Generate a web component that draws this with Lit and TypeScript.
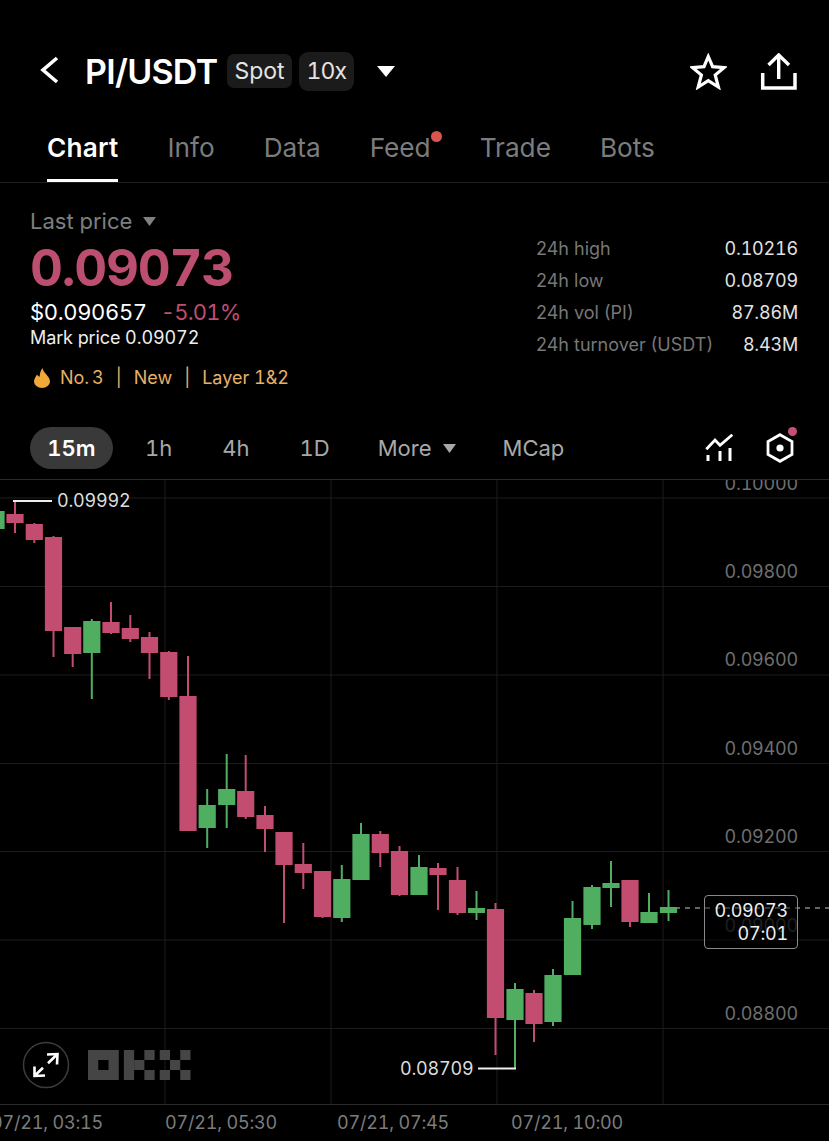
import { LitElement, html, svg, css } from "lit";
import { customElement } from "lit/decorators.js";

// x, wick top, body top, body bottom, wick bottom, up?
type Candle = [number, number, number, number, number, boolean];

const candles: Candle[] = [
  [-4, 507, 511, 529, 531, true],
  [15, 501, 514, 523, 533, false],
  [34.3, 523, 524, 540, 543, false],
  [53.5, 536, 537, 631, 657, false],
  [72.7, 627, 627, 654, 667, false],
  [91.8, 619, 621, 653, 699, true],
  [111, 602, 622, 633, 634, false],
  [130.3, 615, 628, 639, 642, false],
  [149.5, 632, 637, 653, 679, false],
  [168.8, 651, 652, 697, 700, false],
  [188, 656, 696, 831, 831, false],
  [207.2, 789, 805, 828, 848, true],
  [226.7, 754, 789, 805, 828, true],
  [245.7, 755, 791, 817, 819, false],
  [265, 806, 815, 829, 852, false],
  [284, 832, 832, 865, 923, false],
  [303.3, 843, 864, 873, 889, false],
  [322.5, 871, 871, 917, 918, false],
  [341.8, 865, 879, 918, 922, true],
  [361, 823, 834, 880, 880, true],
  [380.3, 831, 834, 853, 867, false],
  [399.5, 846, 851, 895, 896, false],
  [419, 855, 867, 895, 895, true],
  [438, 863, 868, 875, 910, false],
  [457.5, 867, 880, 913, 915, false],
  [476.5, 891, 908, 913, 920, true],
  [495.5, 903, 909, 1018, 1055, false],
  [515, 983, 989, 1020, 1068, true],
  [534, 990, 993, 1024, 1042, false],
  [553, 969, 975, 1022, 1026, true],
  [572.5, 901, 918, 975, 975, true],
  [592, 885, 887, 925, 929, true],
  [611, 861, 883, 888, 907, true],
  [630, 880, 880, 922, 927, false],
  [649, 893, 912, 923, 923, true],
  [668.5, 890, 907, 913, 921, true],
];

const gridY = [498, 586.5, 675, 763.5, 851.5, 940, 1028.5];
const gridX = [165, 331, 497, 663];
const priceLabels = [
  ["0.10000", 484],
  ["0.09800", 572],
  ["0.09600", 660],
  ["0.09400", 749],
  ["0.09200", 837],
  ["0.09000", 926],
  ["0.08800", 1014],
] as const;
const timeLabels = [
  ["07/21, 03:15", -9],
  ["07/21, 05:30", 165],
  ["07/21, 07:45", 337],
  ["07/21, 10:00", 511],
] as const;
const stats = [
  ["24h high", "0.10216"],
  ["24h low", "0.08709"],
  ["24h vol (PI)", "87.86M"],
  ["24h turnover (USDT)", "8.43M"],
];

// OKX mark, cells of 10.25 x 10
const logoCells = [
  [0, 0, 3, 1], [0, 2, 3, 1], [0, 1, 1, 1], [2, 1, 1, 1],
  [3.5, 0, 1, 3], [4.5, 1, 1, 1], [5.5, 0, 1, 1], [5.5, 2, 1, 1],
  [7, 0, 1, 1], [9, 0, 1, 1], [8, 1, 1, 1], [7, 2, 1, 1], [9, 2, 1, 1],
];

@customElement("app-root")
export class AppRoot extends LitElement {
  static styles = css`
    :host {
      display: block;
      width: 829px;
      height: 1141px;
      background: #000;
      overflow: hidden;
      color: #fff;
      font-family: Inter, "Liberation Sans", sans-serif;
      font-variant-numeric: tabular-nums;
    }
    svg {
      display: block;
    }
    .header {
      display: flex;
      align-items: center;
      height: 40px;
      padding: 51px 32px 27px 40px;
    }
    .back {
      margin-right: 26px;
    }
    .title {
      font-size: 34px;
      font-weight: 600;
      letter-spacing: -0.7px;
      margin-right: 10px;
    }
    .tag {
      display: flex;
      align-items: center;
      justify-content: center;
      height: 34px;
      padding: 0 7px;
      border-radius: 7px;
      background: #1b1b1b;
      font-size: 23px;
      color: #e4e4e4;
      margin-right: 7px;
    }
    .tag.tall {
      height: 39px;
      padding: 0 8px;
      border-radius: 9px;
      letter-spacing: -1px;
      margin-right: 8px;
    }
    .title-caret {
      margin-left: 15px;
    }
    .spacer {
      flex: 1;
    }
    .header-actions {
      display: flex;
      gap: 33px;
    }
    .tabs {
      display: flex;
      gap: 49px;
      height: 64px;
      padding-left: 47px;
      border-bottom: 1px solid #1f1f1f;
      font-size: 26.2px;
      color: #7c7c7c;
    }
    .tab {
      position: relative;
      height: 61px;
      padding-top: 14px;
      box-sizing: border-box;
      line-height: 32px;
    }
    .tab.active {
      color: #fff;
      font-weight: 600;
      letter-spacing: 0.2px;
      border-bottom: 3px solid #fff;
      height: 64px;
    }
    .tab .dot {
      position: absolute;
      top: 13px;
      right: -11px;
      width: 11px;
      height: 11px;
      border-radius: 50%;
      background: #d8544c;
    }
    .info {
      display: flex;
      justify-content: space-between;
      height: 226px;
      padding: 25px 31px 0 30px;
      box-sizing: border-box;
    }
    .last {
      display: flex;
      align-items: center;
      gap: 11px;
      font-size: 22px;
      line-height: 26px;
      color: #7f7f7f;
    }
    .price {
      font-size: 51px;
      font-weight: 700;
      line-height: 62px;
      margin-top: 3px;
      color: #bc4e70;
      letter-spacing: -1.2px;
    }
    .sub {
      display: flex;
      gap: 14px;
      font-size: 22px;
      line-height: 26px;
      letter-spacing: -0.35px;
    }
    .sub .chg {
      color: #bc4e70;
      letter-spacing: -0.8px;
    }
    .mark {
      font-size: 18px;
      line-height: 24px;
      margin-top: 1px;
      color: #eee;
      letter-spacing: -0.1px;
    }
    .labels {
      display: flex;
      align-items: center;
      margin-top: 16px;
      font-size: 18px;
      line-height: 24px;
      color: #e6b066;
    }
    .labels svg {
      margin: 0 10px 0 4px;
    }
    .labels .sep {
      margin: 0 12px;
    }
    .labels .rank {
      word-spacing: -2px;
    }
    .stats {
      display: grid;
      grid-template-columns: 1fr auto;
      width: 262px;
      grid-auto-rows: 32px;
      align-items: center;
      align-self: flex-start;
      margin-top: 24px;
      font-size: 18px;
      color: #777;
    }
    .stats .key {
      font-variant-numeric: normal;
    }
    .stats .val {
      text-align: right;
      color: #e2e2e2;
      letter-spacing: -0.2px;
    }
    .intervals {
      display: flex;
      align-items: center;
      height: 70px;
      padding: 8px 35px 0 30px;
      font-size: 22px;
      color: #a8a8a8;
      box-sizing: border-box;
    }
    .intervals .item {
      margin-right: 50px;
    }
    .intervals .pill {
      margin-right: 32px;
    }
    .intervals .before-more {
      margin-right: 48px;
    }
    .pill {
      display: flex;
      align-items: center;
      justify-content: center;
      width: 83px;
      height: 42px;
      border-radius: 21px;
      background: #393939;
      color: #fff;
      font-weight: 600;
    }
    .intervals .more {
      display: flex;
      align-items: center;
      gap: 11px;
      margin-right: 47px;
    }
    .tools {
      display: flex;
      align-items: center;
      gap: 32px;
      position: relative;
    }
    .tools .badge {
      position: absolute;
      right: -3px;
      top: -6px;
      width: 9px;
      height: 9px;
      border-radius: 50%;
      background: #c4507a;
    }
    .chart {
      position: relative;
      height: 626px;
      border-top: 1px solid #2b2b2b;
      border-bottom: 1px solid #2b2b2b;
      box-sizing: border-box;
      overflow: hidden;
    }
    .plot {
      position: absolute;
      left: 0;
      top: 0;
    }
    .plabel,
    .note {
      position: absolute;
      font-size: 18px;
      line-height: 22px;
      letter-spacing: -0.2px;
      transform: translateY(-50%);
    }
    .plabel {
      right: 31px;
      color: #6f6f6f;
    }
    .plabel.dim {
      opacity: 0.5;
    }
    .note {
      color: #dcdcdc;
    }
    .now {
      position: absolute;
      left: 704px;
      top: 415px;
      width: 94px;
      height: 54px;
      box-sizing: border-box;
      border: 1px solid #8a8a8a;
      border-radius: 4px;
      padding: 3px 9px 0 0;
      background: rgba(0, 0, 0, 0.45);
      text-align: right;
      font-size: 18px;
      line-height: 23px;
      letter-spacing: -0.2px;
      color: #efefef;
    }
    .expand {
      position: absolute;
      left: 22px;
      top: 561px;
    }
    .axis {
      position: relative;
      height: 35px;
      font-size: 18px;
      letter-spacing: -0.2px;
      color: #7c7c7c;
    }
    .axis span {
      position: absolute;
      top: 6px;
      line-height: 24px;
      white-space: nowrap;
    }
  `;

  render() {
    return html`
      <div class="header">
        <svg class="back" width="19" height="30" viewBox="0 0 19 30">
          <path d="M17 2 L3 14 L17 26" fill="none" stroke="#fff" stroke-width="3.6" />
        </svg>
        <div class="title">PI/USDT</div>
        <div class="tag">Spot</div>
        <div class="tag tall">10x</div>
        <svg class="title-caret" width="18" height="12" viewBox="0 0 18 12">
          <path d="M0 1 H18 L9 12 Z" fill="#fff" />
        </svg>
        <div class="spacer"></div>
        <div class="header-actions">
          <svg width="37" height="37" viewBox="0 0 37 37">
            <path
              d="M18.3 3.5 L22.6 13.7 L34 14.6 L25.2 22 L28.4 34 L18.3 27.6 L8.2 34 L11.4 22 L2.6 14.6 L14 13.7 Z"
              fill="none"
              stroke="#fff"
              stroke-width="3.2"
            />
          </svg>
          <svg width="37" height="37" viewBox="0 0 37 37">
            <path d="M2.7 20 V35 H35 V20" fill="none" stroke="#fff" stroke-width="3.5" />
            <path
              d="M18.7 26 V2 M8.5 12 L18.7 2 L29 12"
              fill="none"
              stroke="#fff"
              stroke-width="3.4"
            />
          </svg>
        </div>
      </div>
      <div class="tabs">
        <div class="tab active">Chart</div>
        <div class="tab">Info</div>
        <div class="tab">Data</div>
        <div class="tab">Feed<span class="dot"></span></div>
        <div class="tab">Trade</div>
        <div class="tab">Bots</div>
      </div>
      <div class="info">
        <div>
          <div class="last">
            Last price
            <svg width="13" height="9" viewBox="0 0 13 9"><path d="M0 0 H13 L6.5 9 Z" fill="#808080" /></svg>
          </div>
          <div class="price">0.09073</div>
          <div class="sub"><span>$0.090657</span><span class="chg">-5.01%</span></div>
          <div class="mark">Mark price 0.09072</div>
          <div class="labels">
            <svg width="16" height="20" viewBox="0 0 16 20">
              <path
                d="M8.5 0 C9 5 16 8 16 13.5 A8 6.5 0 0 1 0 13.5 C0 10.5 2 8.5 3 6.5 C4 8 5 8.8 5.6 8.6 C6 5 6.5 3 8.5 0 Z"
                fill="#f0a838"
              />
            </svg>
            <span class="rank">No. 3</span><span class="sep">|</span><span>New</span><span class="sep">|</span
            ><span>Layer 1&amp;2</span>
          </div>
        </div>
        <div class="stats">
          ${stats.map(([k, v]) => html`<div class="key">${k}</div><div class="val">${v}</div>`)}
        </div>
      </div>
      <div class="intervals">
        <div class="pill item">15m</div>
        <div class="item">1h</div>
        <div class="item">4h</div>
        <div class="item before-more">1D</div>
        <div class="item more">
          More
          <svg width="13" height="9" viewBox="0 0 13 9"><path d="M0 0 H13 L6.5 9 Z" fill="#a8a8a8" /></svg>
        </div>
        <div>MCap</div>
        <div class="spacer"></div>
        <div class="tools">
          <svg width="29" height="29" viewBox="0 0 29 29">
            <path d="M1.3 15.3 L10 6 L15 11.3 L27.3 0.8" fill="none" stroke="#fff" stroke-width="2.8" />
            <path d="M3 21 V27 M15 17 V27 M25 14 V27" fill="none" stroke="#fff" stroke-width="3" />
          </svg>
          <svg width="28" height="30" viewBox="0 0 28 30">
            <path d="M14 1.7 L26 8.5 V21.5 L14 28.3 L2 21.5 V8.5 Z" fill="none" stroke="#fff" stroke-width="2.8" />
            <circle cx="14" cy="15" r="3.6" fill="#fff" />
          </svg>
          <span class="badge"></span>
        </div>
      </div>
      <div class="chart">
        ${this.renderPlot()}
        ${priceLabels.map(
          ([t, y]) =>
            html`<div class="plabel ${t === "0.09000" ? "dim" : ""}" style="top:${y - 480}px">${t}</div>`
        )}
        <div class="note" style="left:57px;top:21px">0.09992</div>
        <div class="note" style="left:400px;top:589px">0.08709</div>
        <div class="now">0.09073<br />07:01</div>
        <svg class="expand" width="48" height="48" viewBox="0 0 48 48">
          <circle cx="24" cy="24" r="22.5" fill="none" stroke="#3c3c3c" stroke-width="1.5" />
          <path
            d="M25 13.5 L35.5 13 L35 23.5 M35.3 13.2 L26 22.3 M12.5 25.5 L12.5 35 L23 34.5 M12.7 34.8 L21 26.7"
            fill="none"
            stroke="#fff"
            stroke-width="2.6"
          />
        </svg>
      </div>
      <div class="axis">
        ${timeLabels.map(([t, x]) => html`<span style="left:${x}px">${t}</span>`)}
      </div>
    `;
  }

  // chart svg uses page coordinates, viewBox starts at the chart's top edge
  renderPlot() {
    const red = "#c24d71";
    const green = "#4fae60";
    return html`
      <svg class="plot" width="829" height="626" viewBox="0 480 829 626">
        ${gridY.map((y) => svg`<line x1="0" x2="829" y1=${y} y2=${y} stroke="#1c1c1c" />`)}
        ${gridX.map((x) => svg`<line x1=${x} x2=${x} y1="480" y2="1105" stroke="#1c1c1c" />`)}
        <line x1="675" x2="829" y1="908" y2="908" stroke="#c8c8c8" stroke-dasharray="5 5" />
        ${candles.map(([x, hi, top, bot, lo, up]) => {
          const c = up ? green : red;
          return svg`
            <rect x=${x - 1} y=${hi} width="2" height=${lo - hi} fill=${c} />
            <rect x=${x - 8.6} y=${top} width="17.2" height=${bot - top} fill=${c} />
          `;
        })}
        <path d="M13 501 H52 M478 1068.5 H516" stroke="#eee" stroke-width="2" fill="none" />
        <g transform="translate(88 1050)" fill="#454545">
          ${logoCells.map(
            ([x, y, w, h]) =>
              svg`<rect x=${x * 10.25} y=${y * 10} width=${w * 10.25} height=${h * 10} />`
          )}
        </g>
      </svg>
    `;
  }
}
